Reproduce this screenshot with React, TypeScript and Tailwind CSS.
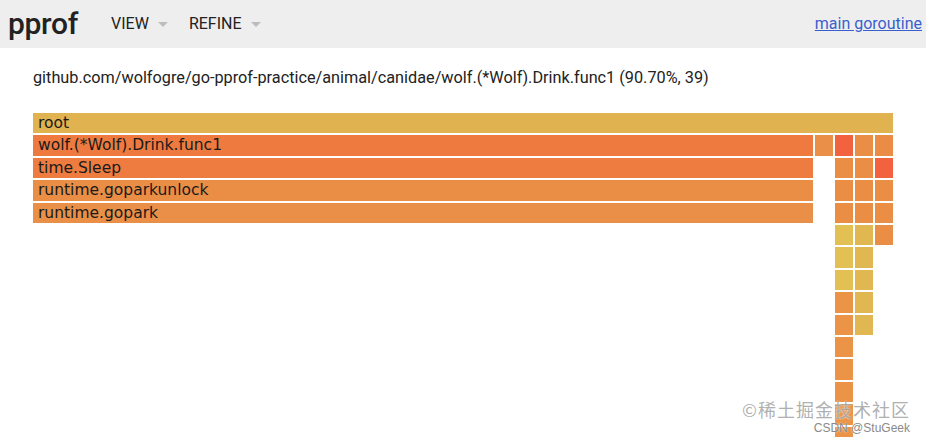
import React from "react";

type Frame = { name?: string; start: number; n: number; depth: number; color: string };

const UNIT = 862 / 43;
const ROW = 22.4;

const OR = "#ea8d45";
const OR2 = "#eb9448";
const RED = "#f2623e";
const YEL = "#e2c053";
const YEL2 = "#e1b752";

const FRAMES: Frame[] = [
  { name: "root", start: 0, n: 43, depth: 0, color: "#e1b250" },
  { name: "wolf.(*Wolf).Drink.func1", start: 0, n: 39, depth: 1, color: "#ee7a40" },
  { name: "time.Sleep", start: 0, n: 39, depth: 2, color: "#ee7c40" },
  { name: "runtime.goparkunlock", start: 0, n: 39, depth: 3, color: "#ea8d45" },
  { name: "runtime.gopark", start: 0, n: 39, depth: 4, color: "#ea8f47" },
  // column A
  { start: 39, n: 1, depth: 1, color: "#e98f47" },
  // column B
  { start: 40, n: 1, depth: 1, color: RED },
  { start: 40, n: 1, depth: 2, color: OR },
  { start: 40, n: 1, depth: 3, color: OR },
  { start: 40, n: 1, depth: 4, color: OR },
  { start: 40, n: 1, depth: 5, color: YEL },
  { start: 40, n: 1, depth: 6, color: YEL },
  { start: 40, n: 1, depth: 7, color: YEL },
  { start: 40, n: 1, depth: 8, color: OR2 },
  { start: 40, n: 1, depth: 9, color: OR2 },
  { start: 40, n: 1, depth: 10, color: OR2 },
  { start: 40, n: 1, depth: 11, color: OR2 },
  { start: 40, n: 1, depth: 12, color: OR2 },
  { start: 40, n: 1, depth: 13, color: OR2 },
  { start: 40, n: 1, depth: 14, color: OR2 },
  // column C
  { start: 41, n: 1, depth: 1, color: OR },
  { start: 41, n: 1, depth: 2, color: OR },
  { start: 41, n: 1, depth: 3, color: OR },
  { start: 41, n: 1, depth: 4, color: OR },
  { start: 41, n: 1, depth: 5, color: YEL2 },
  { start: 41, n: 1, depth: 6, color: YEL2 },
  { start: 41, n: 1, depth: 7, color: YEL2 },
  { start: 41, n: 1, depth: 8, color: YEL2 },
  { start: 41, n: 1, depth: 9, color: YEL2 },
  // column D
  { start: 42, n: 1, depth: 1, color: "#ea8b46" },
  { start: 42, n: 1, depth: 2, color: RED },
  { start: 42, n: 1, depth: 3, color: OR },
  { start: 42, n: 1, depth: 4, color: OR },
  { start: 42, n: 1, depth: 5, color: OR },
];

function Caret() {
  return (
    <svg width="10" height="6" viewBox="0 0 10 6" className="ml-[9px] mt-[1px]">
      <path d="M0 0 L10 0 L5 5 Z" fill="#bdbdbd" />
    </svg>
  );
}

export default function App() {
  return (
    <div className="relative min-h-[437px] bg-white font-['Roboto',sans-serif] text-[#222] overflow-hidden">
      <header className="flex items-center h-12 bg-[#eeeeee]">
        <h1 className="pl-2 pr-[33px] text-[30px] font-medium leading-none tracking-[-0.3px] text-[#222]">pprof</h1>
        <div className="flex items-center text-[16px] text-[#222]">
          <span className="flex items-center">VIEW<Caret /></span>
          <span className="flex items-center ml-[21px]">REFINE<Caret /></span>
        </div>
        <a href="#" className="ml-auto mr-[4px] text-[16px] text-[#3a5fcd] underline">main goroutine</a>
      </header>

      <div className="pl-[33px] pt-[20px] text-[16.25px] leading-5">
        github.com/wolfogre/go-pprof-practice/animal/canidae/wolf.(*Wolf).Drink.func1 (90.70%, 39)
      </div>

      <div className="relative ml-[33px] mt-[25px] w-[862px] h-[340px]">
        {FRAMES.map((f, i) => (
          <div
            key={i}
            className="absolute overflow-hidden whitespace-nowrap pl-[5px] font-['DejaVu_Sans',sans-serif] text-[15.5px] leading-[20px] text-[#1a1a1a]"
            style={{
              left: f.start * UNIT,
              width: f.n * UNIT - 1.6,
              top: f.depth * ROW,
              height: 20.4,
              backgroundColor: f.color,
            }}
          >
            {f.name}
          </div>
        ))}
      </div>

      <div className="absolute right-[16px] top-[397px] flex flex-col items-end gap-[1px] pointer-events-none">
        <span className="text-[18px] leading-[24px] text-[#9a9a9a]/80 font-['Noto_Sans_CJK_SC',sans-serif] tracking-[1px] [text-shadow:0_0_2px_#fff]">
          ©稀土掘金技术社区
        </span>
        <span className="text-[12px] leading-[13px] text-[#8a8a8a] font-['Liberation_Sans',sans-serif] [text-shadow:0_0_2px_#fff]">
          CSDN @StuGeek
        </span>
      </div>
    </div>
  );
}
